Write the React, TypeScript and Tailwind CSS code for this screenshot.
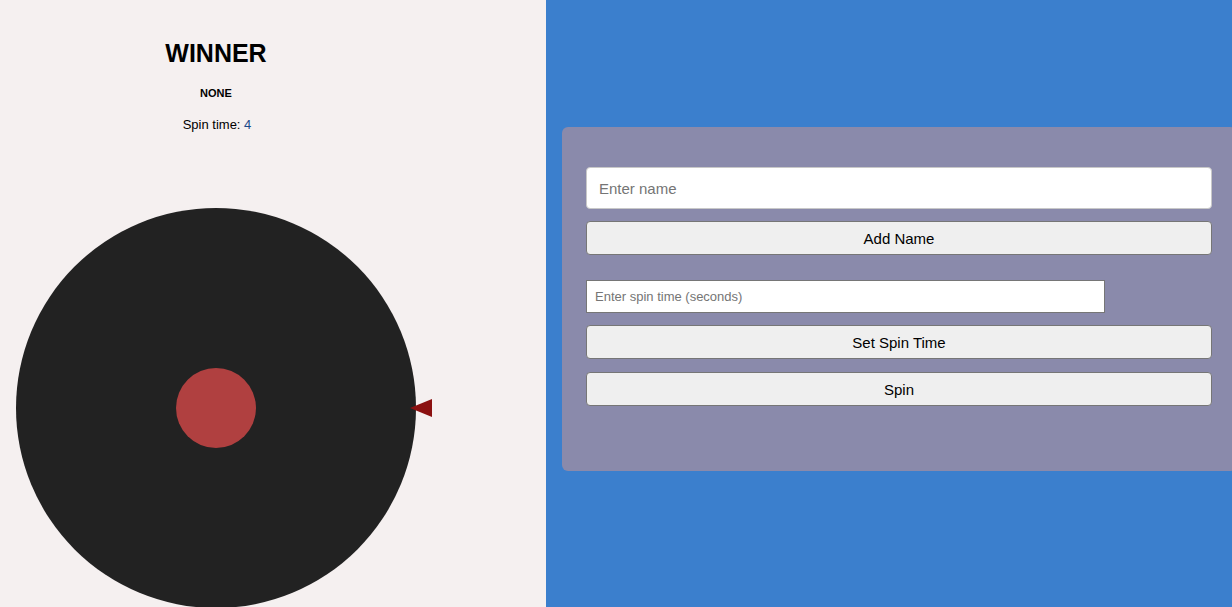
import { useState } from "react";

const App = () => {
  const [name, setName] = useState("");
  const [spinInput, setSpinInput] = useState("");
  const [spinTime, setSpinTime] = useState(4);

  return (
    <div className="flex h-[607px] w-[1232px] overflow-hidden font-['Liberation_Sans',Arial,sans-serif] text-black">
      {/* Wheel side */}
      <div className="w-[546px] shrink-0 bg-[#f5f0f0]">
        <div className="flex w-[432px] flex-col items-center pt-[39px]">
          <h1 className="text-[25px] font-bold leading-[29px]">WINNER</h1>
          <p className="mt-[19px] text-[11px] font-bold leading-[13px]">NONE</p>
          <p className="mt-[17px] pl-0.5 text-[13px] leading-[15px]">
            Spin time: <span className="text-[#1a4a8a]">{spinTime}</span>
          </p>
          <div className="relative mt-[76px] h-[400px] w-[432px]">
            <div className="absolute left-4 top-0 flex h-[400px] w-[400px] items-center justify-center rounded-full bg-[#222222]">
              <div className="h-20 w-20 rounded-full bg-[#b04040]" />
            </div>
            <svg className="absolute left-[410px] top-[191px]" width="22" height="18" viewBox="0 0 22 18">
              <polygon points="0,9 22,0 22,18" fill="#8b1010" />
            </svg>
          </div>
        </div>
      </div>

      {/* Controls side */}
      <div className="flex-1 bg-[#3b7fcd] pl-4 pt-[127px]">
        <div className="flex h-[344px] w-[674px] flex-col rounded-md bg-[#8a8aab] px-6 pt-10">
          <input
            value={name}
            onChange={(e) => setName(e.target.value)}
            placeholder="Enter name"
            className="h-[42px] w-full rounded border border-[#c8c8c8] bg-white px-3 text-[15px] placeholder:text-[#757575] outline-none"
          />
          <button className="mt-3 h-[34px] w-full rounded-sm border border-[#767676] bg-[#efefef] pt-[2px] text-[15px]">
            Add Name
          </button>
          <input
            value={spinInput}
            onChange={(e) => setSpinInput(e.target.value)}
            placeholder="Enter spin time (seconds)"
            className="mt-[25px] h-[33px] w-[519px] border border-[#767676] bg-white px-2 text-[13px] placeholder:text-[#757575] outline-none"
          />
          <button
            onClick={() => spinInput && setSpinTime(Number(spinInput))}
            className="mt-3 h-[34px] w-full rounded-sm border border-[#767676] bg-[#efefef] pt-[2px] text-[15px]"
          >
            Set Spin Time
          </button>
          <button className="mt-[13px] h-[34px] w-full rounded-sm border border-[#767676] bg-[#efefef] pt-[2px] text-[15px]">
            Spin
          </button>
        </div>
      </div>
    </div>
  );
};

export default App;
